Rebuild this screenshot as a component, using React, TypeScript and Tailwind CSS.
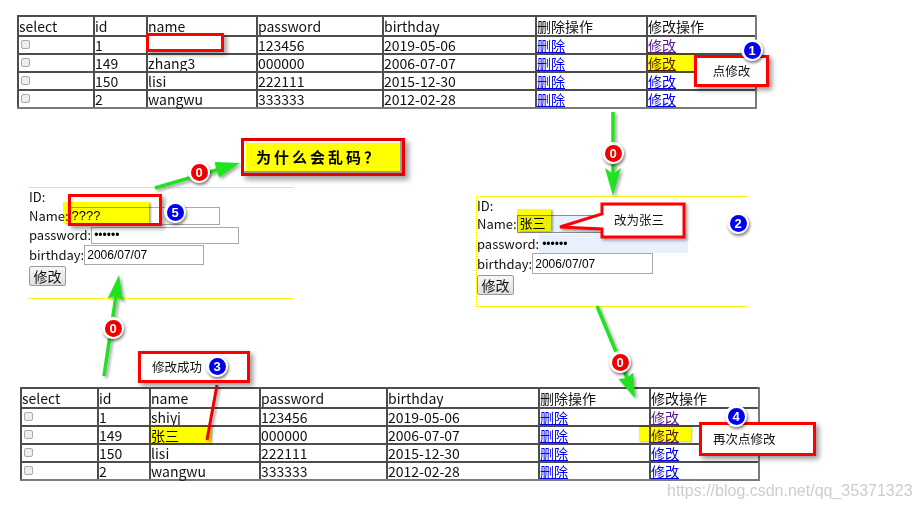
import type { ReactNode } from 'react'

type Row = { id: string; name: string; pw: string; bd: string; visited: boolean }

// the first name is hidden under a white frame in the screenshot
const topRows: Row[] = [
  { id: '1', name: '', pw: '123456', bd: '2019-05-06', visited: true },
  { id: '149', name: 'zhang3', pw: '000000', bd: '2006-07-07', visited: true },
  { id: '150', name: 'lisi', pw: '222111', bd: '2015-12-30', visited: false },
  { id: '2', name: 'wangwu', pw: '333333', bd: '2012-02-28', visited: false },
]

const bottomRows: Row[] = [
  { id: '1', name: 'shiyj', pw: '123456', bd: '2019-05-06', visited: true },
  { id: '149', name: '张三', pw: '000000', bd: '2006-07-07', visited: true },
  { id: '150', name: 'lisi', pw: '222111', bd: '2015-12-30', visited: false },
  { id: '2', name: 'wangwu', pw: '333333', bd: '2012-02-28', visited: false },
]

const headers = ['select', 'id', 'name', 'password', 'birthday', '删除操作', '修改操作']

export default function App() {
  return (
    <div className="relative h-[509px] w-[918px] overflow-hidden bg-white font-['Noto_Sans_CJK_SC','Noto_Sans',sans-serif] text-[#111]">
      <div className="flex flex-col items-start pt-[15px]">
        <UserTable rows={topRows} className="ml-[17px] grid-cols-[76px_53px_110px_126px_153px_111px_109px]" />

        <div className="mt-[78px] flex items-start">
          {/* edit form, before: name came back garbled */}
          <div className="ml-[29px] h-[112px] w-[264px] border-y border-dotted border-[#f0e400] text-[13px]">
            <div className="h-[17px] leading-[17px]">ID:</div>
            <div className="flex h-[21px] items-center">
              Name:
              <Field className="h-[18px] w-[151px] border-[#a9a9a9] bg-white text-[13px]">????</Field>
            </div>
            <div className="flex h-[18px] items-center">
              password:
              <Field className="h-[17px] w-[148px] border-[#a9a9a9] bg-white">••••••</Field>
            </div>
            <div className="flex h-[21px] items-center">
              birthday:
              <Field className="h-[20px] w-[120px] border-[#a9a9a9] bg-white">2006/07/07</Field>
            </div>
            <SubmitButton />
          </div>

          {/* edit form, typing the new name */}
          <div className="ml-[183px] mt-[9px] h-[111px] w-[271px] border-y border-l border-dotted border-[#f0e400] text-[13px]">
            <div className="h-[17px] leading-[17px]">ID:</div>
            <div className="flex h-[20px] items-center">
              Name:
              <Field className="h-[18px] w-[151px] border-[#8c8c8c] bg-[#e8f0fe] text-[13px]">张三</Field>
            </div>
            <div className="flex h-[19px] items-center">
              password:
              <Field className="h-[19px] w-[149px] border-[#e8f0fe] bg-[#e8f0fe]">••••••</Field>
            </div>
            <div className="flex h-[21px] items-center">
              birthday:
              <Field className="h-[21px] w-[121px] border-[#a9a9a9] bg-white">2006/07/07</Field>
            </div>
            <SubmitButton />
          </div>
        </div>

        <UserTable rows={bottomRows} className="ml-[20px] mt-[80px] grid-cols-[77px_52px_110px_127px_152px_111px_109px]" />
      </div>

      {/* yellow marker highlights */}
      <Mark className="left-[647px] top-[53px] h-[18px] w-[48px]" />
      <Mark className="left-[63px] top-[202px] h-[21px] w-[86px] shadow-[2px_1px_2px_rgba(0,0,0,0.35)]" />
      <Mark className="left-[517px] top-[209px] h-[22px] w-[34px] shadow-[2px_1px_2px_rgba(0,0,0,0.35)]" />
      <Mark className="left-[149px] top-[426px] h-[17px] w-[62px] shadow-[1px_1px_2px_rgba(0,0,0,0.3)]" />
      <Mark className="left-[639px] top-[426px] h-[15px] w-[52px] shadow-[1px_1px_2px_rgba(0,0,0,0.3)]" />

      {/* red frames */}
      <div className="absolute left-[146px] top-[33px] h-[19px] w-[78px] border-[3px] border-[#f00] bg-white shadow-[3px_3px_4px_rgba(0,0,0,0.35)]" />
      <div className="absolute left-[68px] top-[194px] h-[32px] w-[94px] border-[3px] border-[#f00] shadow-[3px_3px_4px_rgba(0,0,0,0.35)]" />

      <Arrows />

      <Note className="left-[694px] top-[55px] h-[32px] w-[75px] justify-center">点修改</Note>
      <Note className="left-[138px] top-[351px] h-[32px] w-[112px] pl-[11px]">修改成功</Note>
      <Note className="left-[699px] top-[422px] h-[34px] w-[117px] pl-[11px]">再次点修改</Note>
      <div className="absolute left-[614px] top-[212px] text-[12.5px] leading-[16px]">改为张三</div>

      <div className="absolute left-[241px] top-[138px] flex h-[38px] w-[164px] items-center border-[3px] border-[#e80000] bg-[#ffff00] pl-[12px] text-[15px] font-bold tracking-[3px] text-black shadow-[inset_-2px_-2px_0_#9a9a9a,inset_2px_2px_0_#fffff0,4px_4px_5px_rgba(0,0,0,0.35)]">
        为什么会乱码？
      </div>

      <Badge n="1" className="left-[741px] top-[39px]" />
      <Badge n="0" red className="left-[602px] top-[142px]" />
      <Badge n="0" red className="left-[188px] top-[161px]" />
      <Badge n="5" className="left-[164px] top-[201px]" />
      <Badge n="2" className="left-[727px] top-[212px]" />
      <Badge n="0" red className="left-[102px] top-[317px]" />
      <Badge n="0" red className="left-[609px] top-[351px]" />
      <Badge n="3" className="left-[206px] top-[355px]" />
      <Badge n="4" className="left-[725px] top-[405px]" />

      <div className="absolute left-[667px] top-[481px] font-['Liberation_Sans',Arial,sans-serif] text-[16px] leading-[19px] text-[#cdcdcd]">
        https://blog.csdn.net/qq_35371323
      </div>
    </div>
  )
}

function UserTable({ rows, className }: { rows: Row[]; className: string }) {
  return (
    <div className={`grid border-b-2 border-r-2 border-[#7a7a7a] text-[14px] ${className}`}>
      {headers.map((h) => (
        <Cell key={h} className="h-[20px] leading-[18px]">
          {h}
        </Cell>
      ))}
      {rows.map((r) => (
        <Row key={r.id} row={r} />
      ))}
    </div>
  )
}

function Row({ row }: { row: Row }) {
  return (
    <>
      <Cell>
        <span className="ml-[2px] mt-[3px] block h-[9px] w-[9px] rounded-[2px] border border-[#ababab] bg-[#ededed]" />
      </Cell>
      <Cell>{row.id}</Cell>
      <Cell>{row.name}</Cell>
      <Cell>{row.pw}</Cell>
      <Cell>{row.bd}</Cell>
      <Cell>
        <span className="text-[#0000ee] underline">删除</span>
      </Cell>
      <Cell>
        <span className={row.visited ? 'text-[#551a8b] underline' : 'text-[#0000ee] underline'}>修改</span>
      </Cell>
    </>
  )
}

function Cell({ children, className = 'h-[18px] leading-[16px]' }: { children?: ReactNode; className?: string }) {
  return <div className={`whitespace-nowrap border-l-2 border-t-2 border-[#4d4d4d] ${className}`}>{children}</div>
}

function Field({ children, className }: { children: ReactNode; className: string }) {
  return (
    <div
      className={`flex items-center overflow-hidden whitespace-nowrap border px-[2px] font-['Liberation_Sans','Noto_Sans_CJK_SC',sans-serif] text-[12px] text-black ${className}`}
    >
      {children}
    </div>
  )
}

function SubmitButton() {
  return (
    <div className="mt-[1px] flex h-[20px] w-[37px] items-center justify-center rounded-[2px] border border-[#9a9a9a] bg-linear-to-b from-[#f7f7f7] to-[#dedede] text-[14px] leading-none">
      修改
    </div>
  )
}

function Mark({ className }: { className: string }) {
  return <div className={`absolute bg-[#ffff00] mix-blend-multiply ${className}`} />
}

function Note({ children, className }: { children: ReactNode; className: string }) {
  return (
    <div
      className={`absolute flex items-center border-[3px] border-[#f00] bg-white text-[12.5px] shadow-[3px_3px_5px_rgba(0,0,0,0.4)] ${className}`}
    >
      {children}
    </div>
  )
}

function Badge({ n, red, className }: { n: string; red?: boolean; className: string }) {
  return (
    <div
      className={`absolute flex h-[22px] w-[22px] items-center justify-center rounded-full bg-white shadow-[1px_2px_3px_rgba(0,0,0,0.5)] ${className}`}
    >
      <div
        className={`flex h-[17px] w-[17px] items-center justify-center rounded-full font-['Liberation_Sans',Arial,sans-serif] text-[13px] font-bold leading-none text-white ${red ? 'bg-[#f00000]' : 'bg-[#0000f0]'}`}
      >
        {n}
      </div>
    </div>
  )
}

function Arrows() {
  const green = '#22e022'
  return (
    <svg className="pointer-events-none absolute left-0 top-0" width="918" height="509" viewBox="0 0 918 509">
      <defs>
        <filter id="sh" x="-30%" y="-30%" width="160%" height="160%">
          <feDropShadow dx="2" dy="2" stdDeviation="1.5" floodColor="#000" floodOpacity="0.35" />
        </filter>
      </defs>
      <g filter="url(#sh)">
        <line x1="613" y1="112" x2="613" y2="175" stroke={green} strokeWidth="3.5" />
        <polygon points="613,196 605,168 613,174 621,168" fill={green} />

        <line x1="155" y1="188" x2="220" y2="169" stroke={green} strokeWidth="3.5" />
        <polygon points="240,163 219.3,177.5 216,169 214.7,162.1" fill={green} />

        <line x1="104" y1="376" x2="116" y2="296" stroke={green} strokeWidth="3.5" />
        <polygon points="119,275 123.4,301 115.5,296 107.6,298.5" fill={green} />

        <line x1="597" y1="306" x2="627" y2="378" stroke={green} strokeWidth="3.5" />
        <polygon points="635,398 618.4,378.9 626.5,378 633.2,372.7" fill={green} />

        <line x1="217" y1="385" x2="207" y2="440" stroke="#ee0000" strokeWidth="3" />

        <polygon
          points="602,204 684,204 684,237 602,237 602,229 560,227 602,214"
          fill="#fff"
          stroke="#f00"
          strokeWidth="3"
          strokeLinejoin="miter"
        />
      </g>
    </svg>
  )
}
